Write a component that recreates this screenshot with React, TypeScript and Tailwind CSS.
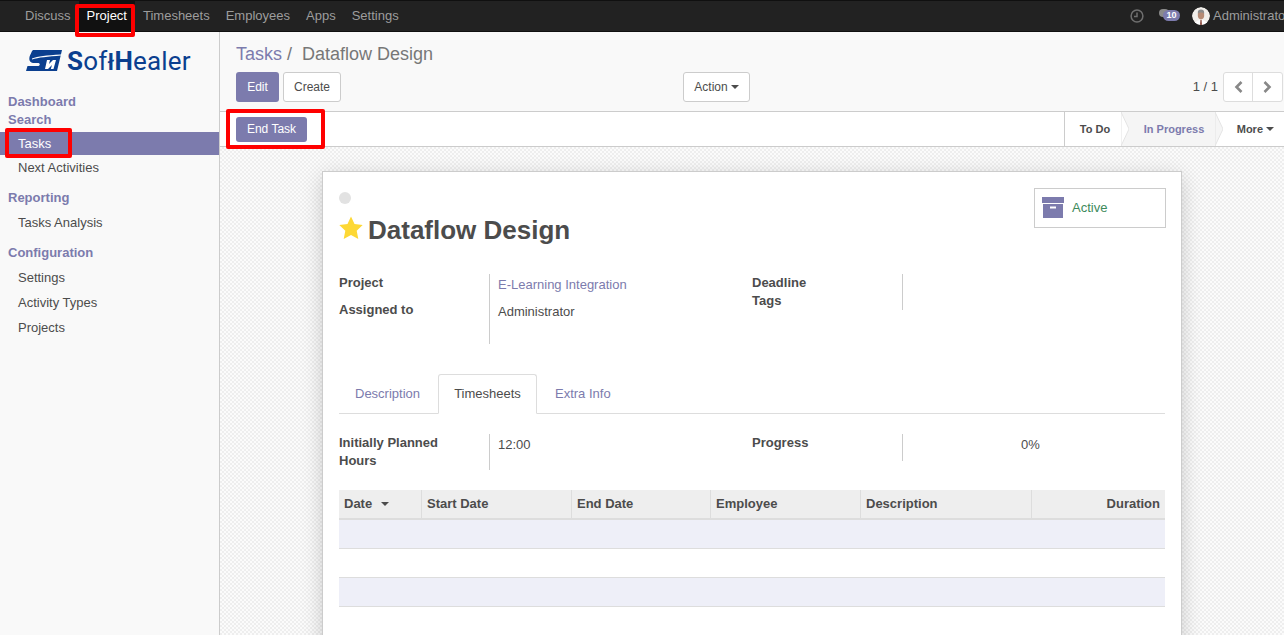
import React from "react";

const Nav = ({ label, active }: { label: string; active?: boolean }) => (
  <div className={active ? "h-[31px] px-2 flex items-center text-white bg-[#111111]" : "h-[31px] px-2 flex items-center text-[#9d9d9d]"}>{label}</div>
);

const Caret = () => <span className="inline-block w-0 h-0 border-x-[4px] border-x-transparent border-t-[4px] border-t-current" />;

const MenuHead = ({ children, className }: { children: React.ReactNode; className: string }) => (
  <div className={"pl-2 font-bold text-[#7c7bad] h-[18px] leading-[18px] " + className}>{children}</div>
);
const MenuItem = ({ children, active }: { children: React.ReactNode; active?: boolean }) => (
  <div className={active ? "pl-[18px] h-[23px] leading-[23px] bg-[#7c7bad] text-white" : "pl-[18px] h-[25px] leading-[25px] text-[#4c4c4c]"}>{children}</div>
);

const Logo = () => (
  <div className="h-[62px] flex items-start pl-[26px] pt-[17px]">
    <svg width="36" height="21" viewBox="0 0 36 21" className="mt-[1px]">
      <path fill="#0b3f8f" d="M7 0H36L31 21H0L1.5 16H12C14 16 14.5 13.5 12.5 13H7C2.5 12.5 2.5 7 5 3.5C5.5 2 6 1 7 0Z" />
      <path fill="#fff" d="M6 8.5C12 6 20 5.5 35 4.5V5.5C22 6.5 12 7.5 6 9.5Z" />
      <path fill="#fff" d="M21 10H24L23 14L27 10H30L27.5 19H24.8L26 15L22 19H19Z" />
    </svg>
    <span className="ml-[5px] text-[#0b3f8f] text-[26px] leading-[24px] font-['Roboto',sans-serif] tracking-[0.2px] whitespace-nowrap">
      <span className="font-bold">S</span>of<span className="font-bold text-[22px]">ł</span><span className="font-bold">H</span>ealer
    </span>
  </div>
);

const Avatar = () => (
  <svg width="18" height="18" viewBox="0 0 18 18" className="rounded-full">
    <circle cx="9" cy="9" r="9" fill="#f1eeea" />
    <path fill="#fff" d="M3 18C3 14 6 13 9 13S15 14 15 18Z" />
    <ellipse cx="9" cy="8" rx="3.2" ry="4.4" fill="#b58a74" />
    <path fill="#8b8b8b" d="M5.8 6.5C5.6 3.5 7 2.6 9 2.6S12.4 3.5 12.2 6.5C11 5 7 5 5.8 6.5Z" />
    <path fill="#8a4b3f" d="M8.4 13H9.6L10 18H8Z" />
  </svg>
);

const Th = ({ children, right, last }: { children: React.ReactNode; right?: boolean; last?: boolean }) => (
  <div className={"h-[28px] flex items-center gap-[9px] font-bold text-[#4c4c4c] " + (right ? "justify-end pr-[5px] " : "pl-[5px] ") + (last ? "" : "border-r border-[#dddddd]")}>{children}</div>
);

export default function App() {
  return (
    <div className="relative w-[1284px] h-[635px] overflow-hidden flex flex-col bg-white text-[13px] text-[#4c4c4c] font-['Liberation_Sans',Arial,sans-serif]">
      <header className="h-[32px] shrink-0 bg-[#222222] border-y border-[#101010] flex items-center">
        <div className="flex ml-[17px]">
          <Nav label="Discuss" />
          <Nav label="Project" active />
          <Nav label="Timesheets" />
          <Nav label="Employees" />
          <Nav label="Apps" />
          <Nav label="Settings" />
        </div>
        <div className="ml-auto flex items-center text-[#9d9d9d] w-[154px] shrink-0 overflow-hidden whitespace-nowrap">
          <svg width="14" height="14" viewBox="0 0 14 14" fill="none" stroke="#6f6f6f" strokeWidth="1.5" className="shrink-0">
            <circle cx="7" cy="7" r="5.9" />
            <path d="M7 3.5V7.5H4" />
          </svg>
          <span className="relative ml-[15px] w-[22px] h-[12px] shrink-0">
            <span className="absolute left-0 top-[-1px] w-[10px] h-[8px] rounded-full bg-[#8a8a8a]" />
            <span className="absolute left-[4px] top-0 w-[17px] h-[11px] rounded-full bg-[#7c7bad] text-white text-[9px] font-bold leading-[11px] text-center">10</span>
          </span>
          <span className="ml-[11px] shrink-0 flex"><Avatar /></span>
          <span className="ml-[3px]">Administrator</span>
        </div>
      </header>

      <div className="flex flex-1 min-h-0">
        <aside className="w-[220px] shrink-0 bg-[#f9f9f9] border-r border-[#cccccc]">
          <Logo />
          <MenuHead className="mt-[-1px]">Dashboard</MenuHead>
          <MenuHead className="">Search</MenuHead>
          <div className="mt-[3px]"><MenuItem active>Tasks</MenuItem></div>
          <MenuItem>Next Activities</MenuItem>
          <MenuHead className="mt-[9px] mb-[3px]">Reporting</MenuHead>
          <MenuItem>Tasks Analysis</MenuItem>
          <MenuHead className="mt-[9px] mb-[3px]">Configuration</MenuHead>
          <MenuItem>Settings</MenuItem>
          <MenuItem>Activity Types</MenuItem>
          <MenuItem>Projects</MenuItem>
        </aside>

        <main className="flex-1 min-w-0 flex flex-col">
          <div className="h-[80px] shrink-0 bg-[#f9f9f9] border-b border-[#cccccc] pl-[16px] pr-[1px]">
            <div className="h-[40px] pt-[9px] text-[18px] leading-[26px] text-[#777777] whitespace-pre">
              <span className="text-[#7c7bad]">Tasks</span> /  Dataflow Design
            </div>
            <div className="flex items-center h-[30px]">
              <button className="h-[30px] w-[43px] rounded-[3px] bg-[#7c7bad] text-white text-[12px]">Edit</button>
              <button className="ml-[4px] h-[30px] w-[58px] rounded-[3px] bg-white border border-[#cccccc] text-[12px] text-[#4c4c4c]">Create</button>
              <button className="ml-[342px] h-[30px] w-[67px] rounded-[3px] bg-white border border-[#cccccc] text-[12px] text-[#4c4c4c] flex items-center justify-center gap-[3px]">Action <Caret /></button>
              <span className="ml-auto mr-[5px] text-[#4c4c4c]">1 / 1</span>
              <div className="flex h-[30px] border border-[#dddddd] rounded-[3px] bg-white">
                <div className="w-[29px] flex items-center justify-center border-r border-[#dddddd]">
                  <svg width="9" height="12" viewBox="0 0 9 12" fill="none" stroke="#888888" strokeWidth="2.6"><path d="M7.5 1L2.5 6L7.5 11" /></svg>
                </div>
                <div className="w-[29px] flex items-center justify-center">
                  <svg width="9" height="12" viewBox="0 0 9 12" fill="none" stroke="#888888" strokeWidth="2.6"><path d="M1.5 1L6.5 6L1.5 11" /></svg>
                </div>
              </div>
            </div>
          </div>

          <div className="h-[35px] shrink-0 bg-white border-b border-[#cccccc] flex items-center pl-[16px]">
            <button className="h-[25px] w-[71px] rounded-[3px] bg-[#7c7bad] text-white text-[12px]">End Task</button>
            <div className="ml-auto h-full flex border-l border-[#cccccc] text-[11px] font-bold">
              <div className="w-[56px] flex items-center justify-center pl-[4px] text-[#4c4c4c]">To Do</div>
              <div className="relative w-[94px] bg-[#f5f5f5] flex items-center justify-center pl-[12px] text-[#7c7bad]">
                In Progress
                <svg width="8" height="34" viewBox="0 0 8 34" className="absolute left-0 top-0"><path d="M0 0L8 17L0 34Z" fill="#ffffff" stroke="#e4e4e4" /></svg>
                <svg width="8" height="34" viewBox="0 0 8 34" className="absolute left-full top-0"><path d="M0 0L8 17L0 34Z" fill="#f5f5f5" stroke="#e4e4e4" /></svg>
              </div>
              <div className="w-[69px] flex items-center justify-end pr-[10px] gap-[3px] text-[#4c4c4c]">More <Caret /></div>
            </div>
          </div>

          <div className="flex-1 min-h-0 pt-[24px] overflow-hidden bg-[#f9f9f9] bg-[repeating-conic-gradient(#eeeeee_0%_25%,#fbfbfb_0%_50%)] bg-[length:4px_4px]">
            <section className="relative w-[860px] h-[500px] mx-auto bg-white border border-[#cccccc] shadow-[0_5px_20px_-1px_rgba(0,0,0,0.2)] px-[16px] pt-[20px]">
              <div className="flex justify-between items-start">
                <div>
                  <div className="w-[12px] h-[12px] rounded-full bg-[#e2e2e2]" />
                  <div className="mt-[10px] flex items-center h-[32px]">
                    <svg width="24" height="24" viewBox="0 0 24 24" className="shrink-0 mt-[-4px]">
                      <path fill="#fdd835" d="M12 .6L15.5 8.1L23.7 9.1L17.7 14.8L19.3 23L12 19L4.7 23L6.3 14.8L.3 9.1L8.5 8.1Z" />
                    </svg>
                    <h1 className="ml-[5px] text-[26px] leading-[32px] font-bold text-[#4c4c4c]">Dataflow Design</h1>
                  </div>
                </div>
                <div className="mt-[-4px] w-[132px] h-[40px] border border-[#cccccc] bg-white flex items-center pl-[7px] mr-[-1px]">
                  <svg width="22" height="22" viewBox="0 0 22 22" className="shrink-0">
                    <path fill="#7c7bad" d="M0 0H22V6H0ZM1 7H21V21H1Z" />
                    <rect x="8" y="9.5" width="6" height="2" fill="#fff" />
                  </svg>
                  <span className="ml-[8px] text-[#3d8a5c]">Active</span>
                </div>
              </div>

              <div className="mt-[28px] grid grid-cols-[150px_263px_150px_1fr]">
                <div className="h-[70px] font-bold leading-[18px]">
                  <div>Project</div>
                  <div className="mt-[9px]">Assigned to</div>
                </div>
                <div className="h-[70px] border-l border-[#cccccc] pl-[8px] leading-[18px] pt-[2px]">
                  <div className="text-[#7c7bad]">E-Learning Integration</div>
                  <div className="mt-[9px]">Administrator</div>
                </div>
                <div className="font-bold leading-[18px]">
                  <div>Deadline</div>
                  <div>Tags</div>
                </div>
                <div className="h-[36px] border-l border-[#cccccc]" />
              </div>

              <div className="mt-[30px] h-[40px] flex border-b border-[#dddddd] pl-0">
                <div className="w-[99px] h-[40px] flex items-center pl-[16px] text-[#7c7bad]">Description</div>
                <div className="w-[99px] h-[40px] flex items-center justify-center bg-white border border-[#dddddd] border-b-white rounded-t-[3px] text-[#4c4c4c]">Timesheets</div>
                <div className="h-[40px] flex items-center pl-[18px] text-[#7c7bad]">Extra Info</div>
              </div>

              <div className="mt-[20px] grid grid-cols-[150px_263px_150px_1fr] leading-[18px]">
                <div className="h-[36px] font-bold">Initially Planned<br />Hours</div>
                <div className="h-[36px] border-l border-[#cccccc] pl-[8px] pt-[2px]">12:00</div>
                <div className="font-bold">Progress</div>
                <div className="h-[27px] border-l border-[#cccccc] pt-[2px] text-center pr-[7px] w-[263px]">0%</div>
              </div>

              <div className="mt-[20px] w-[826px]">
                <div className="grid grid-cols-[83px_150px_139px_150px_171px_133px] bg-[#eeeeee] border-b-2 border-[#dddddd]">
                  <Th>Date <Caret /></Th>
                  <Th>Start Date</Th>
                  <Th>End Date</Th>
                  <Th>Employee</Th>
                  <Th>Description</Th>
                  <Th right last>Duration</Th>
                </div>
                <div className="h-[29px] bg-[#eeeff8] border-b border-[#dddddd]" />
                <div className="h-[29px] bg-white border-b border-[#dddddd]" />
                <div className="h-[29px] bg-[#eeeff8] border-b border-[#dddddd]" />
              </div>
            </section>
          </div>
        </main>
      </div>

      <div className="absolute left-[75px] top-[4px] w-[60px] h-[33px] border-[4px] border-[#ff0000] rounded-[2px] pointer-events-none" />
      <div className="absolute left-[5px] top-[128px] w-[67px] h-[30px] border-[4px] border-[#ff0000] rounded-[2px] pointer-events-none" />
      <div className="absolute left-[226px] top-[109px] w-[99px] h-[40px] border-[4px] border-[#ff0000] rounded-[2px] pointer-events-none" />
    </div>
  );
}
